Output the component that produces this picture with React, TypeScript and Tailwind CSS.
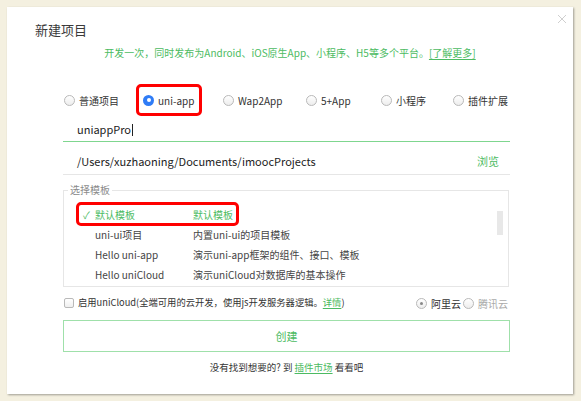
import React from "react";

const font = { fontFamily: '"Noto Sans CJK SC", "Liberation Sans", sans-serif' };

function Radio({ checked, muted }: { checked?: boolean; muted?: boolean }) {
  if (checked && !muted) {
    return (
      <span className="flex h-[11px] w-[11px] shrink-0 items-center justify-center rounded-full bg-[#2f7cf6]">
        <span className="h-[4px] w-[4px] rounded-full bg-white" />
      </span>
    );
  }
  return (
    <span className="flex h-[11px] w-[11px] shrink-0 items-center justify-center rounded-full border border-[#b9b9b9] bg-gradient-to-b from-white to-[#ededed]">
      {checked && <span className="h-[3px] w-[3px] rounded-full bg-[#888]" />}
    </span>
  );
}

const kinds = [
  { label: "普通项目", w: "w-[79px]" },
  { label: "uni-app", w: "w-[80px]", checked: true },
  { label: "Wap2App", w: "w-[83px]" },
  { label: "5+App", w: "w-[75px]" },
  { label: "小程序", w: "w-[72px]" },
  { label: "插件扩展", w: "w-[58px]" },
];

const templates = [
  ["默认模板", "默认模板"],
  ["uni-ui项目", "内置uni-ui的项目模板"],
  ["Hello uni-app", "演示uni-app框架的组件、接口、模板"],
  ["Hello uniCloud", "演示uniCloud对数据库的基本操作"],
];

export default function App() {
  return (
    <div className="h-[401px] w-[581px] bg-[#f4f0e0] pl-[7px] pt-[7px]" style={font}>
      <div className="relative flex h-[387px] w-[566px] flex-col bg-white text-[#333] shadow-[1px_1px_2px_rgba(0,0,0,0.35)]">
        <svg className="absolute left-[550px] top-[7px]" width="10" height="10" viewBox="0 0 10 10">
          <path d="M1 1L9 9M9 1L1 9" stroke="#cfcfcf" strokeWidth="1" />
        </svg>

        <div className="ml-[28px] mt-[13px] h-[20px] text-[13px] leading-[20px] text-[#3a3a3a]">新建项目</div>
        <div className="mt-[5px] h-[16px] text-center text-[10px] leading-[16px] text-[#4cbb62]">
          开发一次，同时发布为Android、iOS原生App、小程序、H5等多个平台。
          <span className="underline underline-offset-2">[了解更多]</span>
        </div>

        <div className="ml-[56px] mt-[23px] flex w-[447px] flex-col">
          {/* project kinds */}
          <div className="flex h-[32px] items-center">
            {kinds.map((k) => (
              <label key={k.label} className={`relative flex h-[16px] items-center gap-[4px] pl-[1px] text-[10px] text-[#333] ${k.w}`}>
                <Radio checked={k.checked} />
                <span>{k.label}</span>
                {k.checked && (
                  <span className="absolute left-[-6px] top-[-8px] h-[32px] w-[66px] rounded-[5px] border-[3px] border-[#f00]" />
                )}
              </label>
            ))}
          </div>

          {/* name */}
          <div className="flex h-[26px] items-center border-b border-[#7fd68f] pl-[14px] pt-[2px] text-[11px] text-[#222]">
            uniappPro<span className="ml-[1px] h-[12px] w-px bg-[#222]" />
          </div>

          {/* location */}
          <div className="flex h-[33px] items-center justify-between border-b border-[#e6e6e6] pl-[14px] pr-[11px] pt-[7px] text-[11px] text-[#222]">
            <span>/Users/xuzhaoning/Documents/imoocProjects</span>
            <span className="text-[11px] text-[#4cbb62]">浏览</span>
          </div>

          {/* templates */}
          <fieldset className="relative mt-[7px] w-[446px] border border-[#e6e6e6] pb-[2px]">
            <legend className="ml-[4px] px-[2px] text-[10px] leading-[16px] text-[#8a8a8a]">选择模板</legend>
            <div className="flex flex-col pt-[6px]">
              {templates.map(([name, desc], i) => (
                <div key={name} className={`relative flex h-[20px] items-center text-[10px] ${i === 0 ? "text-[#4cbb62]" : "text-[#444]"}`}>
                  <span className="w-[31px] pl-[19px] text-[10px]">{i === 0 ? "✓" : ""}</span>
                  <span className="w-[98px]">{name}</span>
                  <span>{desc}</span>
                  {i === 0 && (
                    <span className="absolute left-[12px] top-[-2px] h-[24px] w-[163px] rounded-[5px] border-[3px] border-[#f00]" />
                  )}
                </div>
              ))}
            </div>
            <span className="absolute left-[433px] top-[13px] h-[24px] w-[6px] bg-[#e8e8e8]" />
          </fieldset>

          {/* uniCloud */}
          <div className="mt-[8px] flex h-[16px] items-center text-[9.3px] text-[#333]">
            <span className="ml-[1px] mr-[4px] h-[10px] w-[10px] rounded-[2px] border border-[#b9b9b9] bg-gradient-to-b from-white to-[#efefef]" />
            <span>
              启用uniCloud(全端可用的云开发，使用js开发服务器逻辑。
              <span className="text-[#4cbb62] underline underline-offset-2">详情</span>)
            </span>
            <span className="ml-auto flex items-center gap-[4px] text-[10px]">
              <Radio checked muted />
              <span>阿里云</span>
            </span>
            <span className="ml-[2px] mr-[2px] flex items-center gap-[4px] text-[10px] text-[#aaa]">
              <Radio />
              <span>腾讯云</span>
            </span>
          </div>

          <button className="mt-[9px] flex h-[32px] w-[447px] items-center justify-center border border-[#9fe0aa] text-[11px] text-[#4cbb62]">
            创建
          </button>

          <div className="mt-[7px] h-[16px] text-center text-[9.5px] leading-[16px] text-[#333]">
            没有找到想要的? 到 <span className="text-[#4cbb62] underline underline-offset-2">插件市场</span> 看看吧
          </div>
        </div>
      </div>
    </div>
  );
}
